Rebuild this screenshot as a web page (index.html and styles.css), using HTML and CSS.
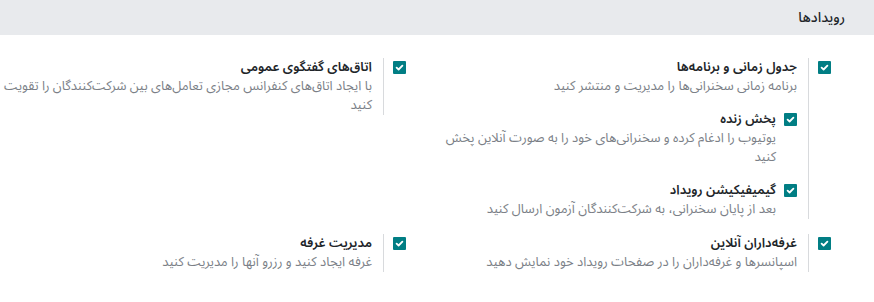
FILE: index.html
```html
<!DOCTYPE html>
<html lang="fa" dir="rtl">
<head>
<meta charset="utf-8">
<link rel="stylesheet" href="styles.css">
</head>
<body>
<div class="page">
  <div class="section-head">رویدادها</div>
  <div class="settings">
    <div class="box">
      <div class="check-pane"><span class="cb"><svg viewBox="0 0 13 13"><path d="M3.6 6.6 L5.6 8.5 L9.4 4.6" /></svg></span></div>
      <div class="text-pane">
        <div class="label">جدول زمانی و برنامه‌ها</div>
        <div class="desc">برنامه زمانی سخنرانی‌ها را مدیریت و منتشر کنید</div>
        <div class="sub">
          <span class="cb"><svg viewBox="0 0 13 13"><path d="M3.6 6.6 L5.6 8.5 L9.4 4.6" /></svg></span>
          <div class="sub-text">
            <div class="label">پخش زنده</div>
            <div class="desc">یوتیوب را ادغام کرده و سخنرانی‌های خود را به صورت آنلاین پخش کنید</div>
          </div>
        </div>
        <div class="sub">
          <span class="cb"><svg viewBox="0 0 13 13"><path d="M3.6 6.6 L5.6 8.5 L9.4 4.6" /></svg></span>
          <div class="sub-text">
            <div class="label">گیمیفیکیشن رویداد</div>
            <div class="desc">بعد از پایان سخنرانی، به شرکت‌کنندگان آزمون ارسال کنید</div>
          </div>
        </div>
      </div>
    </div>
    <div class="box">
      <div class="check-pane"><span class="cb"><svg viewBox="0 0 13 13"><path d="M3.6 6.6 L5.6 8.5 L9.4 4.6" /></svg></span></div>
      <div class="text-pane">
        <div class="label">اتاق‌های گفتگوی عمومی</div>
        <div class="desc">با ایجاد اتاق‌های کنفرانس مجازی تعامل‌های بین شرکت‌کنندگان را تقویت کنید</div>
      </div>
    </div>
    <div class="box">
      <div class="check-pane"><span class="cb"><svg viewBox="0 0 13 13"><path d="M3.6 6.6 L5.6 8.5 L9.4 4.6" /></svg></span></div>
      <div class="text-pane">
        <div class="label">غرفه‌داران آنلاین</div>
        <div class="desc">اسپانسرها و غرفه‌داران را در صفحات رویداد خود نمایش دهید</div>
      </div>
    </div>
    <div class="box">
      <div class="check-pane"><span class="cb"><svg viewBox="0 0 13 13"><path d="M3.6 6.6 L5.6 8.5 L9.4 4.6" /></svg></span></div>
      <div class="text-pane">
        <div class="label">مدیریت غرفه</div>
        <div class="desc">غرفه ایجاد کنید و رزرو آنها را مدیریت کنید</div>
      </div>
    </div>
  </div>
</div>
</body>
</html>
```

FILE: styles.css
```css
html, body {
  margin: 0;
  padding: 0;
  background: #ffffff;
}
.page {
  direction: rtl;
  font-family: "Noto Sans Arabic", "Vazirmatn", "DejaVu Sans", sans-serif;
  font-size: 13px;
  color: #212529;
}
.section-head {
  background: #e8eaed;
  height: 35px;
  line-height: 35px;
  padding-right: 29px;
  font-size: 14px;
  font-weight: 500;
  color: #212529;
}
.settings {
  display: grid;
  grid-template-columns: 425px 437px;
  padding: 23px 12px 0 0;
  row-gap: 15px;
}
.box {
  display: flex;
  align-items: flex-start;
}
.check-pane {
  width: 53px;
  flex: none;
  display: flex;
  justify-content: flex-start;
  padding-right: 31px;
  box-sizing: border-box;
  padding-top: 3px;
}
.cb {
  width: 13px;
  height: 13px;
  background: #017e84;
  border-radius: 1px;
  display: inline-block;
  flex: none;
}
.cb svg {
  display: block;
  width: 13px;
  height: 13px;
}
.cb path {
  fill: none;
  stroke: #ffffff;
  stroke-width: 1.8;
  stroke-linecap: round;
  stroke-linejoin: round;
}
.text-pane {
  flex: 1;
  border-right: 1px solid #d8dadd;
  padding-right: 11px;
  min-height: 36px;
}
.label {
  font-weight: 600;
  line-height: 19px;
  color: #212529;
}
.desc {
  color: #7b7f87;
  line-height: 19px;
}
.sub {
  display: flex;
  align-items: flex-start;
  margin-top: 14px;
  gap: 8px;
}
.sub .cb {
  margin-top: 3px;
}
.sub-text {
  flex: 1;
}
```
